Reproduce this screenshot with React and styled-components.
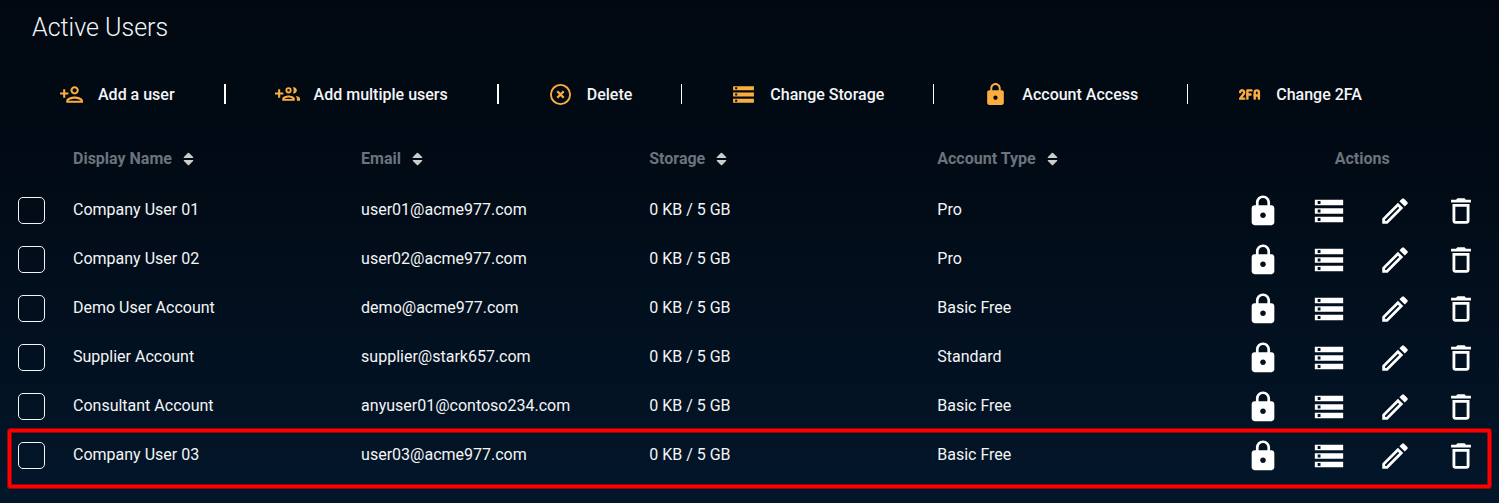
import React, { useState } from "react";
import styled, { createGlobalStyle } from "styled-components";
import {
  MdDeleteOutline,
  MdLock,
  MdOutlineModeEdit,
  MdOutlinePersonAdd,
  MdStorage
} from "react-icons/md";
import { TbAuth2Fa } from "react-icons/tb";

const GlobalStyle = createGlobalStyle`
  * {
    box-sizing: border-box;
  }

  body {
    margin: 0;
    min-height: 100vh;
    color: #f4f5f6;
    font-family: Roboto, "Liberation Sans", sans-serif;
    background: linear-gradient(#010812 0%, #010a14 30%, #03162a 100%) no-repeat;
  }
`;

const Page = styled("main")`
  width: 100%;
`;

const Title = styled("h1")`
  margin: 0;
  padding: 13px 32px 0;
  font-size: 25px;
  line-height: 30px;
  font-weight: 300;
`;

const Toolbar = styled("div")`
  display: flex;
  align-items: center;
  padding: 31px 10px 0;
`;

const ToolButton = styled("button")`
  display: flex;
  align-items: center;
  gap: 14px;
  height: 40px;
  padding: 0 49px;
  border: 0;
  background: none;
  color: inherit;
  font-family: inherit;
  font-size: 16px;
  font-weight: 500;
  white-space: nowrap;
  cursor: pointer;

  svg {
    width: 25px;
    height: 25px;
    color: #fcad3f;
  }
`;

const Divider = styled("span")`
  width: ${props => (props.$wide ? 2 : 1)}px;
  height: 20px;
  background-color: #fff;
`;

const Table = styled("table")`
  width: 100%;
  margin-top: 14px;
  border-collapse: collapse;
  table-layout: fixed;
`;

const HeadCell = styled("th")`
  width: ${props => props.$width || "auto"};
  height: 58px;
  padding: 3px 0 0;
  color: #6b737c;
  font-size: 16px;
  font-weight: 700;
  text-align: ${props => props.$align || "left"};
`;

const SortButton = styled("button")`
  display: inline-flex;
  align-items: center;
  gap: 11px;
  padding: 0;
  border: 0;
  background: none;
  color: inherit;
  font: inherit;
  cursor: pointer;

  svg {
    color: #ccc;
  }
`;

const Row = styled("tr")`
  position: relative;
`;

const RowMarker = styled("span")`
  position: absolute;
  inset: -2px 8px -8px;
  border: 3px solid #fe0000;
  border-radius: 2px;
  box-shadow: 0 0 0 1px #8c0910, inset 0 0 0 1px #8c0910;
  pointer-events: none;
`;

const Cell = styled("td")`
  height: 49px;
  padding: 0 0 2px;
  font-size: 16px;
  white-space: nowrap;
`;

const CheckCell = styled(Cell)`
  padding: 0 0 0 18px;
`;

const Checkbox = styled("input")`
  appearance: none;
  display: block;
  width: 27px;
  height: 27px;
  margin: 0;
  border: 1px solid #f4f5f6;
  border-radius: 5px;
  cursor: pointer;

  &:checked {
    background-color: #fcad3f;
  }
`;

const ActionCell = styled(Cell)`
  padding: 0;
`;

const Actions = styled("div")`
  display: flex;
  justify-content: center;
  gap: 32px;
`;

const ActionButton = styled("button")`
  display: flex;
  padding: 0;
  border: 0;
  background: none;
  color: #fff;
  cursor: pointer;

  svg {
    width: 34px;
    height: 34px;
  }
`;

const GroupAddIcon = () => (
  <svg viewBox="0 0 24 24" fill="currentColor" fillRule="evenodd">
    <path d="M8 10H5V7H3v3H0v2h3v3h2v-3h3z" />
    <path d="M18 11c1.66 0 2.99-1.34 2.99-3S19.66 5 18 5c-.32 0-.63.05-.91.14.57.81.9 1.79.9 2.86s-.34 2.04-.9 2.86c.28.09.59.14.91.14z" />
    <path d="M13 11a3 3 0 1 0 0-6 3 3 0 0 0 0 6zm0-1.8a1.2 1.2 0 1 1 0-2.4 1.2 1.2 0 0 1 0 2.4z" />
    <path d="M19.62 13.16c.83.73 1.38 1.66 1.38 2.84v2h3v-2c0-1.54-2.37-2.49-4.38-2.84z" />
    <path d="M13 13c-2 0-6 1-6 3v2h12v-2c0-2-4-3-6-3zm-3.900 3.200c.6-.6 2.300-1.300 3.900-1.300s3.300.7 3.900 1.300z" />
  </svg>
);

const CancelIcon = () => (
  <svg viewBox="0 0 24 24" fill="none" stroke="currentColor">
    <circle cx="12" cy="12" r="9.2" strokeWidth="1.8" />
    <path d="M8.9 8.9l6.2 6.2M15.1 8.9l-6.2 6.2" strokeWidth="2.2" />
  </svg>
);

const TwoFactorIcon = () => <TbAuth2Fa strokeWidth={2.3} />;

const SortIcon = () => (
  <svg width="11" height="14" viewBox="0 0 12 14" fill="currentColor">
    <path d="M5.3.4a1 1 0 0 1 1.4 0l4.3 4.4c.5.5.2 1.2-.6 1.2H1.600c-.8 0-1.100-.7-.6-1.200z" />
    <path d="M5.3 13.6a1 1 0 0 0 1.4 0l4.3-4.4c.5-.5.2-1.2-.6-1.2H1.600c-.8 0-1.100.7-.6 1.200z" />
  </svg>
);

const tools = [
  { label: "Add a user", Icon: MdOutlinePersonAdd },
  { label: "Add multiple users", Icon: GroupAddIcon, wide: true },
  { label: "Delete", Icon: CancelIcon, wide: true },
  { label: "Change Storage", Icon: MdStorage },
  { label: "Account Access", Icon: MdLock },
  { label: "Change 2FA", Icon: TwoFactorIcon }
];

const columns = ["Display Name", "Email", "Storage", "Account Type"];

const rowActions = [
  { label: "Account access", Icon: MdLock },
  { label: "Change storage", Icon: MdStorage },
  { label: "Edit", Icon: MdOutlineModeEdit },
  { label: "Delete", Icon: MdDeleteOutline }
];

const users = [
  { name: "Company User 01", email: "user01@acme977.com", type: "Pro" },
  { name: "Company User 02", email: "user02@acme977.com", type: "Pro" },
  { name: "Demo User Account", email: "demo@acme977.com", type: "Basic Free" },
  { name: "Supplier Account", email: "supplier@stark657.com", type: "Standard" },
  {
    name: "Consultant Account",
    email: "anyuser01@contoso234.com",
    type: "Basic Free"
  },
  {
    name: "Company User 03",
    email: "user03@acme977.com",
    type: "Basic Free",
    marked: true
  }
];

const UserRow = ({ user, checked, onToggle }) => (
  <Row>
    <CheckCell>
      <Checkbox
        type="checkbox"
        aria-label={user.name}
        checked={checked}
        onChange={onToggle}
      />
      {user.marked && <RowMarker />}
    </CheckCell>
    <Cell>{user.name}</Cell>
    <Cell>{user.email}</Cell>
    <Cell>0 KB / 5 GB</Cell>
    <Cell>{user.type}</Cell>
    <ActionCell>
      <Actions>
        {rowActions.map(({ label, Icon }) => (
          <ActionButton key={label} type="button" aria-label={label}>
            <Icon />
          </ActionButton>
        ))}
      </Actions>
    </ActionCell>
  </Row>
);

const App = () => {
  const [selected, setSelected] = useState([]);

  const toggle = name => {
    setSelected(
      selected.includes(name)
        ? selected.filter(item => item !== name)
        : [...selected, name]
    );
  };

  return (
    <Page>
      <GlobalStyle />
      <Title>Active Users</Title>
      <Toolbar>
        {tools.map(({ label, Icon, wide }, index) => (
          <React.Fragment key={label}>
            {index > 0 && <Divider $wide={wide} />}
            <ToolButton type="button">
              <Icon />
              {label}
            </ToolButton>
          </React.Fragment>
        ))}
      </Toolbar>
      <Table>
        <thead>
          <tr>
            <HeadCell as="td" $width="73px" />
            {columns.map(column => (
              <HeadCell key={column} $width="19.22%">
                <SortButton type="button">
                  {column}
                  <SortIcon />
                </SortButton>
              </HeadCell>
            ))}
            <HeadCell $align="center">Actions</HeadCell>
          </tr>
        </thead>
        <tbody>
          {users.map(user => (
            <UserRow
              key={user.name}
              user={user}
              checked={selected.includes(user.name)}
              onToggle={() => toggle(user.name)}
            />
          ))}
        </tbody>
      </Table>
    </Page>
  );
};

export default App;
